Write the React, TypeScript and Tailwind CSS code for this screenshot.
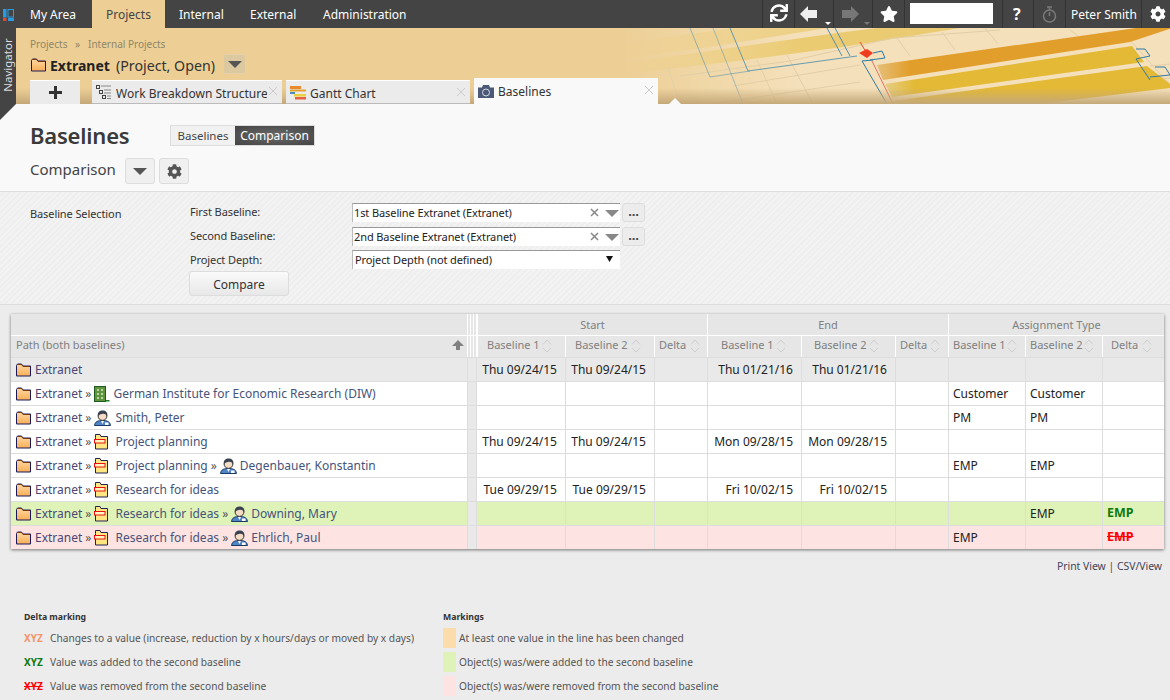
import React from "react";
import { FaSync, FaStar, FaCog } from "react-icons/fa";

const Folder = () => (
  <svg width="16" height="14" viewBox="0 0 16 14" className="shrink-0">
    <defs>
      <linearGradient id="fg" x1="0" y1="0" x2="0" y2="1">
        <stop offset="0" stopColor="#fdd9a5" />
        <stop offset="1" stopColor="#f9ae58" />
      </linearGradient>
    </defs>
    <path d="M0.5 2.5 L1.5 1 H5.5 L7 3 H14.5 V13 H0.5 Z" fill="url(#fg)" stroke="#1a1a5a" strokeWidth="1" />
    <path d="M1 1.5 H5.5 L7 3.5 H14" fill="none" stroke="#7a3b10" strokeWidth="1" />
  </svg>
);

const Task = () => (
  <svg width="15" height="16" viewBox="0 0 15 16" className="shrink-0">
    <path d="M1.5 3.5 V0.5 H6 L7 2.5 H13.5 V15 H1.5 Z" fill="#ffe680" stroke="#20205a" />
    <rect x="0.5" y="5.5" width="10.5" height="3.5" fill="#fff6c0" stroke="#e81010" strokeWidth="1" />
  </svg>
);

const Person = () => (
  <svg width="17" height="16" viewBox="0 0 17 16" className="shrink-0">
    <path d="M0.5 15.5 C1 11.5 4 10.5 8.5 10.5 C13 10.5 16 11.5 16.5 15.5 Z" fill="#4f86c6" stroke="#1c3a66" />
    <path d="M7 11 L8.5 14 L10 11 Z" fill="#fff" />
    <rect x="11" y="12.5" width="3.5" height="2.5" fill="#fff" />
    <circle cx="8.5" cy="6" r="4.4" fill="#f4dcc4" stroke="#333" />
    <path d="M4 6 C3 1.5 7 0 9.5 0.6 C13 1 14 4 13 6.5 C12 4 10 3.5 8 4 C6 4.4 5 5 4 6 Z" fill="#3a4252" />
  </svg>
);

const Building = () => (
  <svg width="16" height="16" viewBox="0 0 16 16" className="shrink-0">
    <rect x="0.5" y="0.5" width="11" height="15" fill="#5e9440" stroke="#1f5a1f" />
    <rect x="11.5" y="14" width="4" height="1.5" fill="#1f7a1f" />
    <g fill="#b8d8a0">
      <rect x="3" y="3" width="2" height="2" /><rect x="7" y="3" width="2" height="2" />
      <rect x="3" y="7" width="2" height="2" /><rect x="7" y="7" width="2" height="2" />
      <rect x="3" y="11" width="2" height="2" /><rect x="7" y="11" width="2" height="2" />
    </g>
  </svg>
);

const Sort = ({ x }: { x: number }) => (
  <svg width="10" height="16" viewBox="0 0 10 16" className="absolute top-[2px]" style={{ left: x }}>
    <path d="M1 6.5 L5 2 L9 6.5" fill="none" stroke="#cfcfcf" />
    <path d="M1 10 L5 14 L9 10" fill="none" stroke="#cfcfcf" />
  </svg>
);

const Caret = ({ c = "#555" }: { c?: string }) => (
  <svg width="14" height="7" viewBox="0 0 14 7"><path d="M0 0 H14 L7 7 Z" fill={c} /></svg>
);

const Sep = ({ x }: { x: number }) => (
  <div className="absolute top-0 h-[28px] w-px bg-[#333]" style={{ left: x }} />
);

const Banner = () => (
  <svg width="560" height="76" viewBox="610 28 560 76" className="absolute right-0 top-0">
    <defs>
      <linearGradient id="fade" gradientUnits="userSpaceOnUse" x1="620" y1="0" x2="800" y2="0">
        <stop offset="0" stopColor="#f4e0bb" stopOpacity="0" />
        <stop offset="1" stopColor="#f4e0bb" stopOpacity="1" />
      </linearGradient>
      <linearGradient id="fadeY" gradientUnits="userSpaceOnUse" x1="620" y1="0" x2="800" y2="0">
        <stop offset="0" stopColor="#ebcb72" stopOpacity="0" />
        <stop offset="1" stopColor="#ebcb72" stopOpacity="1" />
      </linearGradient>
      <linearGradient id="fadeO" gradientUnits="userSpaceOnUse" x1="877" y1="0" x2="910" y2="0">
        <stop offset="0" stopColor="#e6bf7a" />
        <stop offset="1" stopColor="#e29e2a" />
      </linearGradient>
      <linearGradient id="fadeG" gradientUnits="userSpaceOnUse" x1="883" y1="0" x2="915" y2="0">
        <stop offset="0" stopColor="#e6cf8a" />
        <stop offset="1" stopColor="#e3b935" />
      </linearGradient>
    </defs>
    <rect x="610" y="28" width="560" height="76" fill="url(#fade)" />
    <polygon points="610,45 733,28 827,28 703,48 610,60" fill="url(#fadeY)" opacity="0.75" />
    <polygon points="610,65 837,33 877,28 960,28 843,47 737,61 610,76" fill="url(#fadeY)" />
    <g stroke="#e2cfa8" strokeWidth="1" fill="none">
      <path d="M680 76 L790 61 L893 38 L1000 30" />
      <path d="M733 86 L860 65" />
      <path d="M710 104 L860 82" />
      <path d="M668 68 L680 104" />
      <path d="M757 60 L777 104" />
      <path d="M787 55 L813 104" />
      <path d="M897 38 L910 56" />
      <path d="M942 32 L955 50" />
      <path d="M985 28 L998 44" />
      <path d="M1070 30 L1078 36" />
      <path d="M1130 40 L1170 85" />
      <path d="M1150 66 L1170 64" />
      <path d="M1075 90 L1170 78" />
    </g>
    <polygon points="877,65 1136,28 1172,28 1130,42 883,80" fill="url(#fadeO)" />
    <polygon points="885,84 1132,46 1144,62 892,97" fill="url(#fadeG)" />
    <polygon points="893,101 1147,66 1170,84 1170,88 1040,104 893,104" fill="url(#fadeG)" />
    <g stroke="#4f8fae" strokeWidth="1" fill="none">
      <path d="M690 28 L710 77 L750 71" opacity="0.55" />
      <path d="M713 28 L743 104" opacity="0.45" />
      <path d="M730 28 L748 71 L857 56" opacity="0.85" />
      <path d="M827 28 L842 56" />
      <path d="M835 28 L850 56" />
    </g>
    <g stroke="#2f7ba6" strokeWidth="1" fill="none">
      <path d="M873 53 L882 51 L885 58 L870 60" />
      <path d="M873 60 L862 61 L887 104" />
      <path d="M1136 49 L1145 49 L1150 56 L1136 59 L1150 80" />
      <path d="M1155 67 L1165 67 L1170 75 L1150 77" />
    </g>
    <path d="M860 42 L866 52" stroke="#ea4a2a" fill="none" />
    <path d="M872 61 L893 104" stroke="#e87060" fill="none" />
    <polygon points="859,53 867,49 873,53 867,58" fill="#f03c1e" />
  </svg>
);

const cols = "grid-cols-[456px_10px_89px_89px_53px_94px_94px_53px_77px_77px_61px]";

const Sp = () => <span className="ml-[3px] mr-[3px] text-[#555]">»</span>;
const Ex = () => (
  <>
    <Folder />
    <span className="ml-[3px] text-[#4a4874]">Extranet</span>
  </>
);
const emp = "EMP";
const rows: { p: React.ReactNode; v: React.ReactNode[]; bg: string }[] = [
  { p: <Ex />, v: ["Thu 09/24/15", "Thu 09/24/15", "", "Thu 01/21/16", "Thu 01/21/16", "", "", "", ""], bg: "bg-[#e9e9e9]" },
  { p: <><Ex /><Sp /><Building /><span className="ml-[3px]">German Institute for Economic Research (DIW)</span></>, v: ["", "", "", "", "", "", "Customer", "Customer", ""], bg: "bg-white" },
  { p: <><Ex /><Sp /><Person /><span className="ml-[4px]">Smith, Peter</span></>, v: ["", "", "", "", "", "", "PM", "PM", ""], bg: "bg-white" },
  { p: <><Ex /><Sp /><Task /><span className="ml-[6px]">Project planning</span></>, v: ["Thu 09/24/15", "Thu 09/24/15", "", "Mon 09/28/15", "Mon 09/28/15", "", "", "", ""], bg: "bg-white" },
  { p: <><Ex /><Sp /><Task /><span className="ml-[6px]">Project planning</span><Sp /><Person /><span className="ml-[3px]">Degenbauer, Konstantin</span></>, v: ["", "", "", "", "", "", emp, emp, ""], bg: "bg-white" },
  { p: <><Ex /><Sp /><Task /><span className="ml-[6px]">Research for ideas</span></>, v: ["Tue 09/29/15", "Tue 09/29/15", "", "Fri 10/02/15", "Fri 10/02/15", "", "", "", ""], bg: "bg-white" },
  { p: <><Ex /><Sp /><Task /><span className="ml-[6px]">Research for ideas</span><Sp /><Person /><span className="ml-[3px]">Downing, Mary</span></>, v: ["", "", "", "", "", "", "", emp, <b className="text-[12.5px] text-[#0f7a0f]">EMP</b>], bg: "bg-[#dff3b8]" },
  { p: <><Ex /><Sp /><Task /><span className="ml-[6px]">Research for ideas</span><Sp /><Person /><span className="ml-[3px]">Ehrlich, Paul</span></>, v: ["", "", "", "", "", "", emp, "", <b className="text-[12.5px] text-[#f00] line-through">EMP</b>], bg: "bg-[#fee3e3]" },
];

const heads: [string, number, number][] = [
  ["Baseline 1", 9, 64], ["Baseline 2", 9, 65], ["Delta", 4, 35], ["Baseline 1", 13, 68], ["Baseline 2", 12, 67], ["Delta", 4, 34], ["Baseline 1", 4, 58], ["Baseline 2", 4, 58], ["Delta", 8, 39],
];

const Combo = ({ t, top }: { t: string; top: number }) => (
  <>
    <div className="absolute left-[352px] flex h-[19px] w-[268px] items-center border-l border-t border-l-[#bbb] border-t-[#999] bg-white pl-[1px] text-[#222]" style={{ top }}>
      {t}
      <svg className="absolute left-[237px] top-[4px]" width="9" height="9" viewBox="0 0 9 9"><path d="M1 1 L8 8 M8 1 L1 8" stroke="#888" strokeWidth="1.5" /></svg>
      <div className="absolute left-[252px] top-[6px]"><Caret c="#888" /></div>
    </div>
    <div className="absolute left-[622px] flex h-[19px] w-[23px] items-center justify-center rounded-[3px] border border-[#ddd] bg-[#ececec] pb-[2px] text-[13px] font-bold leading-none text-[#444]" style={{ top }}>...</div>
  </>
);

const X = ({ x, y }: { x: number; y: number }) => (
  <svg className="absolute" style={{ left: x, top: y }} width="10" height="10" viewBox="0 0 10 10"><path d="M1 1 L9 9 M9 1 L1 9" stroke="#ccc" /></svg>
);

export default function App() {
  return (
    <div className="relative h-[700px] w-[1170px] overflow-hidden bg-[#ececec] font-['Open_Sans',sans-serif] text-[12px] text-[#333]">
      {/* top nav */}
      <div className="absolute left-0 top-0 h-[28px] w-[1170px] bg-[#444] text-white">
        <svg className="absolute left-[3px] top-[9px]" width="11" height="12" viewBox="0 0 11 12">
          <rect x="0" y="0" width="3.5" height="8.5" fill="#2b9be0" />
          <rect x="5" y="0.5" width="5.5" height="7.5" fill="none" stroke="#2b9be0" />
          <rect x="0" y="9" width="3.5" height="3" fill="#e8452a" />
          <rect x="5" y="9" width="6" height="3" fill="#2b9be0" />
        </svg>
        <span className="absolute left-[30px] top-[6px]">My Area</span>
        <div className="absolute left-[92px] top-0 h-[28px] w-[73px] bg-[#edcf95] pl-[14px] pt-[6px] text-[#444]">Projects</div>
        <span className="absolute left-[179px] top-[6px]">Internal</span>
        <span className="absolute left-[250px] top-[6px]">External</span>
        <span className="absolute left-[323px] top-[6px]">Administration</span>
        {[762, 794, 833, 872, 904, 1002, 1033, 1065, 1141].map((x) => <Sep key={x} x={x} />)}
        <FaSync className="absolute left-[770px] top-[3px] h-[20px] w-[18px]" />
        <svg className="absolute left-[800px] top-[6px]" width="18" height="16" viewBox="0 0 18 16"><path d="M0 8 L8 0 V4 H17 V12 H8 V16 Z" fill="#eee" /></svg>
        <svg className="absolute left-[825px] top-[22px]" width="6" height="3" viewBox="0 0 6 3"><path d="M0 0 H6 L3 3 Z" fill="#fff" /></svg>
        <svg className="absolute left-[841px] top-[6px]" width="18" height="16" viewBox="0 0 18 16"><path d="M18 8 L10 0 V4 H1 V12 H10 V16 Z" fill="#777" /></svg>
        <svg className="absolute left-[864px] top-[22px]" width="6" height="3" viewBox="0 0 6 3"><path d="M0 0 H6 L3 3 Z" fill="#777" /></svg>
        <FaStar className="absolute left-[880px] top-[5px] text-[18px]" />
        <div className="absolute left-[910px] top-[3px] h-[21px] w-[83px] bg-white" />
        <span className="absolute left-[1013px] top-[2px] text-[16px] font-bold">?</span>
        <svg className="absolute left-[1042px] top-[6px]" width="15" height="17" viewBox="0 0 15 17" fill="none" stroke="#7a7a7a" strokeWidth="1.5">
          <circle cx="7.5" cy="10" r="6" /><path d="M7.5 10 V6 M5 1 H10 M7.5 1 V4" />
        </svg>
        <span className="absolute left-[1071px] top-[6px]">Peter Smith</span>
        <FaCog className="absolute left-[1150px] top-[6px] text-[16px]" />
      </div>

      {/* header band */}
      <div className="absolute left-0 top-[28px] h-[76px] w-[1170px] overflow-hidden bg-[#edcf95]">
        <Banner />
        <div className="absolute bottom-0 left-0 h-[16px] w-full bg-gradient-to-b from-transparent to-[#c4a878]" />
      </div>
      <span className="absolute left-[30px] top-[37px] text-[10px] text-[#8f866a]">Projects</span>
      <span className="absolute left-[75px] top-[37px] text-[10px] text-[#8f866a]">»</span>
      <span className="absolute left-[88px] top-[37px] text-[10px] text-[#8f866a]">Internal Projects</span>
      <div className="absolute left-[31px] top-[58px]"><Folder /></div>
      <span className="absolute left-[50px] top-[55px] text-[14px] font-bold text-[#222]">Extranet</span>
      <span className="absolute left-[116px] top-[55px] text-[14.2px] text-[#333]">(Project, Open)</span>
      <div className="absolute left-[223px] top-[54px] flex h-[20px] w-[23px] items-center justify-center rounded-[3px] border border-[#e4d2ac] bg-[#dcc9a0]"><Caret /></div>

      {/* tabs */}
      <div className="absolute left-[30px] top-[80px] flex h-[24px] w-[50px] items-center justify-center border-t border-white bg-[#ebebeb]">
        <svg width="13" height="13" viewBox="0 0 13 13"><path d="M5 0 H8 V5 H13 V8 H8 V13 H5 V8 H0 V5 H5 Z" fill="#333" /></svg>
      </div>
      <div className="absolute left-[92px] top-[80px] h-[24px] w-[190px] border-b border-t border-b-[#bbb] border-t-white bg-[#ebebeb]">
        <svg className="absolute left-[4px] top-[4px]" width="16" height="15" viewBox="0 0 16 15" fill="none" stroke="#444">
          <rect x="0.5" y="0.5" width="3" height="3" /><rect x="3.5" y="5.5" width="3" height="3" /><rect x="6.5" y="10.5" width="3" height="3" />
          <path d="M5 1 H15 M8 5 H15 M8 8 H15 M11 11 H15 M11 13.5 H15" stroke="#888" />
        </svg>
        <span className="absolute left-[24px] top-[4px] w-[151px] overflow-hidden whitespace-nowrap text-[#333]">Work Breakdown Structure</span>
        <X x={176} y={5} />
      </div>
      <div className="absolute left-[286px] top-[80px] h-[24px] w-[184px] border-b border-t border-b-[#bbb] border-t-white bg-[#ebebeb]">
        <svg className="absolute left-[4px] top-[5px]" width="16" height="14" viewBox="0 0 16 14">
          <rect x="0" y="0" width="11" height="3" fill="#e88a30" /><rect x="0" y="3.5" width="16" height="2" fill="#e8a030" />
          <rect x="0" y="6" width="5" height="2" fill="#4a90c0" /><rect x="4" y="8" width="12" height="2.5" fill="#e8d040" /><rect x="5" y="11" width="11" height="2.5" fill="#e86040" />
        </svg>
        <span className="absolute left-[24px] top-[4px] text-[#333]">Gantt Chart</span>
        <X x={170} y={6} />
      </div>
      <div className="absolute left-[474px] top-[78px] h-[26px] w-[184px] bg-[#f9f9f9]">
        <svg className="absolute left-[4px] top-[7px]" width="16" height="13" viewBox="0 0 16 13">
          <path d="M0 2.5 H4 L5 0 H11 L12 2.5 H16 V13 H0 Z" fill="#4c5a78" />
          <circle cx="8" cy="7.5" r="3.5" fill="#4c5a78" stroke="#d8dce4" />
        </svg>
        <span className="absolute left-[24px] top-[5px] text-[#333]">Baselines</span>
        <X x={170} y={7} />
      </div>
      <svg className="absolute left-[669px] top-[98px]" width="12" height="6" viewBox="0 0 12 6"><path d="M0 6 L6 0 L12 6 Z" fill="#f9f9f9" /></svg>

      {/* title area */}
      <div className="absolute left-0 top-[104px] h-[87px] w-[1170px] bg-[#f9f9f9]" />
      {/* navigator */}
      <div className="absolute left-0 top-[28px] h-[92px] w-[16px] bg-[#444] [clip-path:polygon(0_0,100%_0,100%_82.6%,0_100%)]" />
      <span className="absolute left-[-22px] top-[58px] w-[60px] -rotate-90 text-center text-[11.5px] leading-[14px] text-[#ddd]">Navigator</span>
      <span className="absolute left-[30px] top-[119px] text-[22px] font-semibold leading-[32px] tracking-[-0.2px] text-[#3a3a3a]">Baselines</span>
      <div className="absolute left-[170px] top-[125px] flex h-[21px] w-[145px] border border-[#ddd]">
        <div className="flex w-[64px] items-center justify-center bg-[#f1f1f1] text-[11.5px] text-[#444]">Baselines</div>
        <div className="flex flex-1 items-center justify-center bg-[radial-gradient(ellipse_at_center,#6a6a6a,#444)] text-white">Comparison</div>
      </div>
      <span className="absolute left-[30px] top-[158px] text-[15px] leading-[22px] text-[#444]">Comparison</span>
      <div className="absolute left-[125px] top-[158px] flex h-[26px] w-[30px] items-center justify-center rounded-[3px] border border-[#ddd] bg-[#f0f0f0]"><Caret /></div>
      <div className="absolute left-[159px] top-[158px] flex h-[26px] w-[30px] items-center justify-center rounded-[3px] border border-[#ddd] bg-[#f0f0f0]"><FaCog className="text-[15px] text-[#555]" /></div>

      {/* form */}
      <div className="absolute left-0 top-[191px] h-[114px] w-[1170px] border-y border-[#ddd] bg-[repeating-linear-gradient(135deg,#f3f3f3_0,#f3f3f3_2px,#eeeeee_2px,#eeeeee_4px)]" />
      <div className="text-[11px] tracking-[-0.1px]">
        <span className="absolute left-[30px] top-[206px] text-[#333]">Baseline Selection</span>
        <span className="absolute left-[190px] top-[204px] text-[#333]">First Baseline:</span>
        <span className="absolute left-[190px] top-[228px] text-[#333]">Second Baseline:</span>
        <span className="absolute left-[190px] top-[252px] text-[#333]">Project Depth:</span>
        <Combo t="1st Baseline Extranet (Extranet)" top={203} />
        <Combo t="2nd Baseline Extranet (Extranet)" top={227} />
        <div className="absolute left-[352px] top-[250px] flex h-[19px] w-[268px] items-center border-l border-t border-l-[#bbb] border-t-[#999] bg-white pl-[2px] text-[#222]">
          Project Depth (not defined)
          <svg className="absolute left-[253px] top-[5px]" width="7" height="6" viewBox="0 0 7 6"><path d="M0 0 H7 L3.5 6 Z" fill="#111" /></svg>
        </div>
      </div>
      <div className="absolute left-[189px] top-[271px] flex h-[25px] w-[100px] items-center justify-center rounded-[3px] border border-[#ddd] bg-gradient-to-b from-[#fafafa] to-[#e8e8e8] pt-[2px] text-[12px] text-[#333]">Compare</div>

      {/* table */}
      <div className="absolute left-[11px] top-[314px] w-[1153px] shadow-[0_1px_3px_rgba(0,0,0,0.5)]">
        <div className={`grid ${cols} h-[21px] bg-[#e6e6e6] text-[11px] text-[#808080]`}>
          <div />
          <div className="bg-[repeating-linear-gradient(90deg,#fff_0,#fff_1px,#e6e6e6_1px,#e6e6e6_3px)]" />
          <div className="col-span-3 flex items-center justify-center border-l border-r border-white pt-[1px]">Start</div>
          <div className="col-span-3 flex items-center justify-center border-r border-white pt-[1px]">End</div>
          <div className="col-span-3 flex items-center justify-center pt-[1px]">Assignment Type</div>
        </div>
        <div className={`grid ${cols} h-[22px] border-t border-white bg-[#e6e6e6] text-[11px] text-[#808080]`}>
          <div className="relative flex items-center pb-[2px] pl-[5px]">
            Path (both baselines)
            <svg className="absolute left-[441px] top-[4px]" width="12" height="10" viewBox="0 0 12 10"><path d="M0 6 L6 0 L12 6 H8 V10 H4 V6 Z" fill="#808080" /></svg>
          </div>
          <div className="bg-[repeating-linear-gradient(90deg,#fff_0,#fff_1px,#e6e6e6_1px,#e6e6e6_3px)]" />
          {heads.map(([h, pl, sx], i) => (
            <div key={i} className={`relative flex items-center pb-[2px] ${i < 8 ? "border-r border-white" : ""} ${i === 0 ? "border-l border-white" : ""}`} style={{ paddingLeft: pl }}>
              <span className="whitespace-nowrap">{h}</span><Sort x={sx} />
            </div>
          ))}
        </div>
        {rows.map((r, i) => (
          <div key={i} className={`grid ${cols} h-[24px] border-t border-[#ddd] ${r.bg} text-[#222]`}>
            <div className="flex items-center whitespace-nowrap pl-[5px] text-[#46547a]">{r.p}</div>
            <div className="border-x border-[#ddd] bg-[#e9e9e9]" />
            {r.v.map((v, j) => (
              <div key={j} className={`flex items-center whitespace-nowrap ${j < 8 ? "border-r border-[#ddd]" : ""} ${j < 6 ? "justify-end pr-[8px]" : "pl-[4px]"}`}>{v}</div>
            ))}
          </div>
        ))}
      </div>

      {/* links */}
      <div className="absolute right-[8px] top-[559px] text-[10.4px] text-[#445]">Print View <span className="text-[#833]">|</span> CSV/View</div>

      {/* legend */}
      <span className="absolute left-[24px] top-[611px] text-[8.7px] font-bold text-[#333]">Delta marking</span>
      <div className="absolute left-[24px] top-[631px] text-[10px] font-bold text-[#f4956a]">XYZ</div>
      <span className="absolute left-[50px] top-[631px] text-[10.2px] text-[#555]">Changes to a value (increase, reduction by x hours/days or moved by x days)</span>
      <div className="absolute left-[24px] top-[655px] text-[10px] font-bold text-[#0f7a0f]">XYZ</div>
      <span className="absolute left-[50px] top-[655px] text-[10.2px] text-[#555]">Value was added to the second baseline</span>
      <div className="absolute left-[24px] top-[679px] text-[10px] font-bold text-[#f00] line-through">XYZ</div>
      <span className="absolute left-[50px] top-[679px] text-[10.2px] text-[#555]">Value was removed from the second baseline</span>

      <span className="absolute left-[443px] top-[611px] text-[8.7px] font-bold text-[#333]">Markings</span>
      <div className="absolute left-[443px] top-[628px] h-[20px] w-[13px] bg-[#fbdcaa]" />
      <span className="absolute left-[459px] top-[631px] text-[10.2px] text-[#555]">At least one value in the line has been changed</span>
      <div className="absolute left-[443px] top-[652px] h-[20px] w-[13px] bg-[#dff3b8]" />
      <span className="absolute left-[459px] top-[655px] text-[10.2px] text-[#555]">Object(s) was/were added to the second baseline</span>
      <div className="absolute left-[443px] top-[676px] h-[20px] w-[13px] bg-[#fee3e3]" />
      <span className="absolute left-[459px] top-[679px] text-[10.2px] text-[#555]">Object(s) was/were removed from the second baseline</span>
    </div>
  );
}
